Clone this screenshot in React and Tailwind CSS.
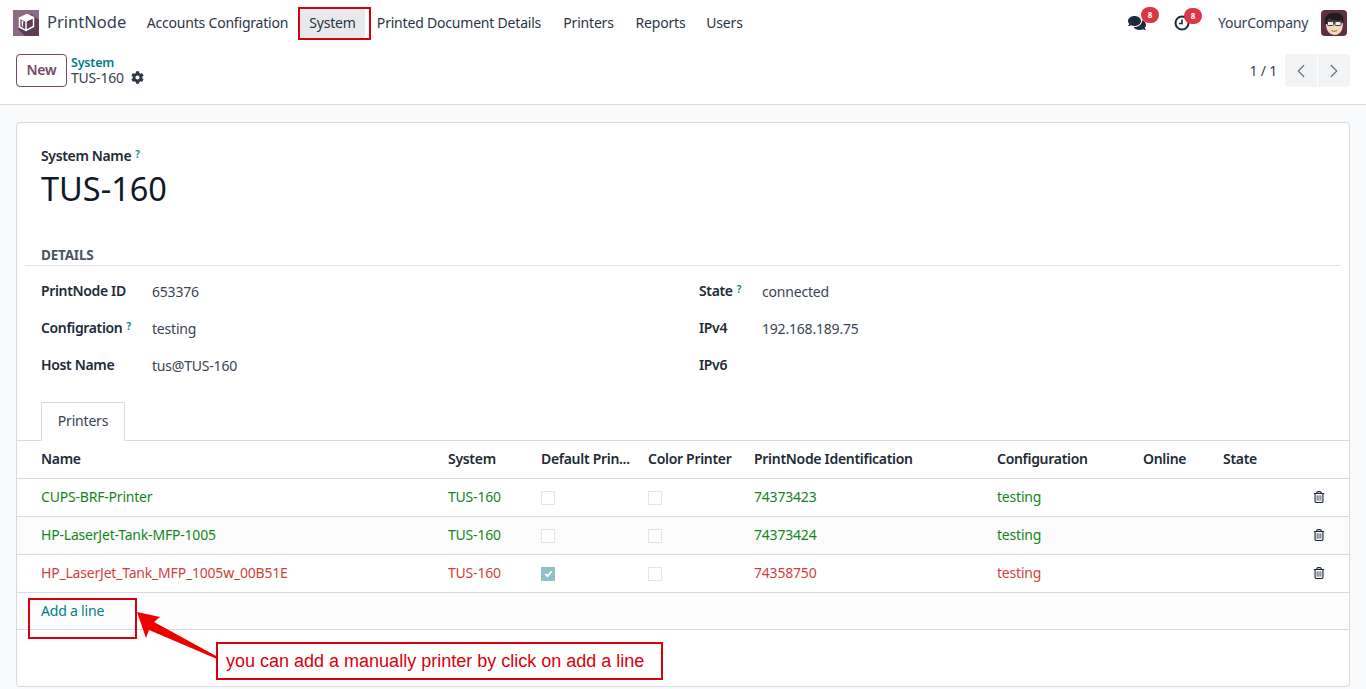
import React from "react";
import { FaCog, FaComments } from "react-icons/fa";
import { FaRegTrashCan } from "react-icons/fa6";
import { FiChevronLeft, FiChevronRight } from "react-icons/fi";

const menu = [
  { label: "Accounts Configration", cls: "w-[163px]" },
  { label: "System", cls: "w-[65px] mx-px bg-[#e7e9ed] rounded" },
  { label: "Printed Document Details", cls: "w-[186px]" },
  { label: "Printers", cls: "w-[73px]" },
  { label: "Reports", cls: "w-[71px]" },
  { label: "Users", cls: "w-[57px]" },
];

const printers = [
  { name: "CUPS-BRF-Printer", id: "74373423", color: "text-[#16851f]" },
  { name: "HP-LaserJet-Tank-MFP-1005", id: "74373424", color: "text-[#16851f]", shade: true },
  { name: "HP_LaserJet_Tank_MFP_1005w_00B51E", id: "74358750", color: "text-[#d23f3a]", checked: true },
];

const cols = "grid grid-cols-[407px_93px_107px_106px_243px_146px_80px_1fr]";

const Help = () => (
  <sup className="ml-1 text-[10px] font-semibold text-[#017e84] relative -top-[3px]">?</sup>
);

const Logo = () => (
  <svg width="26" height="26" viewBox="0 0 26 26" className="shrink-0">
    <rect width="26" height="26" fill="#8b6a83" />
    <path d="M5 19 L18 4 L26 10 V26 H12 Z" fill="#5d3c55" />
    <path d="M6.5 8 L14 4.5 L20.5 7.5 L13 11 Z" fill="#fff" />
    <path d="M6.5 8 L14 4.5 L20.5 7.5 V16.5 L13 20.5 L6.5 17 Z" fill="none" stroke="#fff" strokeWidth="1.5" />
    <path d="M13 11 V20.5 M20.5 7.5 L13 11 L6.5 8" fill="none" stroke="#fff" strokeWidth="1.5" />
    <path d="M9.5 11 V16.5" fill="none" stroke="#fff" strokeWidth="1.3" />
  </svg>
);

const Avatar = () => (
  <svg width="26" height="26" viewBox="0 0 26 26" className="shrink-0 rounded">
    <rect width="26" height="26" fill="#5c2f45" />
    <path d="M5 14 C5 21 9 25 14 25 C19 25 22 20 22 13 Z" fill="#f3d8bb" />
    <path d="M4 14 C2 6 8 2 14 3 C20 2 24 7 22 14 L21 10 C16 11 10 10 8 8 C7 10 6 12 6 14 Z" fill="#221c20" />
    <rect x="6.5" y="11.5" width="6" height="4" rx="1" fill="#eef0ee" stroke="#3a3a3a" strokeWidth="1" />
    <rect x="14" y="11.5" width="6" height="4" rx="1" fill="#eef0ee" stroke="#3a3a3a" strokeWidth="1" />
    <path d="M10.5 20.5 C12 21.5 14 21.5 16 20.5" fill="none" stroke="#9a5a48" strokeWidth="1" />
  </svg>
);

const Clock = () => (
  <svg width="16" height="16" viewBox="0 0 16 16" fill="none" stroke="#1f2a3a" strokeWidth="2">
    <circle cx="8" cy="8" r="6.5" />
    <path d="M8 4.5 V8.5 H5" strokeWidth="1.6" />
  </svg>
);

const Badge = ({ left }) => (
  <span className={`absolute -top-[7px] ${left} w-[18px] h-[16px] rounded-full bg-[#dc3545] text-white text-[8px] font-bold flex items-center justify-center`}>
    8
  </span>
);

const Box = ({ checked }) =>
  checked ? (
    <span className="w-[14px] h-[14px] mt-[2px] bg-[#8fc2c6] flex items-center justify-center">
      <svg width="9" height="9" viewBox="0 0 10 10" fill="none" stroke="#fff" strokeWidth="2">
        <path d="M1.5 5.5 L4 8 L8.5 2.5" />
      </svg>
    </span>
  ) : (
    <span className="w-[14px] h-[14px] mt-[2px] border border-[#e2e4e8] bg-white block" />
  );

const Field = ({ label, value, help, right }) => (
  <div className="flex items-center h-[37px]">
    <div className={`${right ? "w-[63px]" : "w-[111px]"} font-semibold tracking-[-0.35px] text-[#212b36] whitespace-nowrap`}>
      {label}
      {help && <Help />}
    </div>
    <div className="pt-[1px] text-[#3a4452] whitespace-nowrap">{value}</div>
  </div>
);

export default function App() {
  return (
    <div className="relative h-[689px] overflow-hidden bg-[#f9fafb] text-[14px] tracking-[-0.2px] text-[#212b36] font-['Noto_Sans',sans-serif]">
      {/* top nav */}
      <div className="h-[46px] bg-white flex items-center pl-[13px] pr-[19px]">
        <Logo />
        <span className="ml-[8px] w-[89px] pb-[1px] text-[16.5px] text-[#374151] tracking-normal">PrintNode</span>
        {menu.map((m) => (
          <div key={m.label} className={`h-[30px] pb-[1px] flex items-center justify-center whitespace-nowrap text-[#2b3542] ${m.cls}`}>
            {m.label}
          </div>
        ))}
        <div className="ml-auto flex items-center">
          <div className="relative w-[46px] flex text-[#1f2a3a]">
            <FaComments size={18} />
            <Badge left="left-[13px]" />
          </div>
          <div className="relative w-[44px] flex">
            <Clock />
            <Badge left="left-[10px]" />
          </div>
          <span className="w-[103px] pb-[1px] tracking-[-0.25px] text-[#374151]">YourCompany</span>
          <Avatar />
        </div>
      </div>

      {/* control panel */}
      <div className="h-[59px] bg-white border-b border-[#d8dadd] flex items-start pl-[16px] pr-[16px] pt-[8px]">
        <button className="w-[51px] h-[33px] pb-[2px] border border-[#714b67] rounded font-semibold text-[#714b67]">New</button>
        <div className="ml-[4px] leading-[15px]">
          <div className="text-[12.5px] font-semibold text-[#017e84] mt-[1px]">System</div>
          <div className="flex items-center text-[#374151]">
            TUS-160
            <FaCog size={13} className="ml-[7px] text-[#2b3a4a]" />
          </div>
        </div>
        <div className="ml-auto flex items-center">
          <span className="mr-[8px] pb-[1px] text-[#374151]">1 / 1</span>
          <div className="w-[32px] h-[33px] bg-[#f1f3f5] rounded-l flex items-center justify-center text-[#6b7280] mr-[1px]">
            <FiChevronLeft size={22} strokeWidth={1.3} />
          </div>
          <div className="w-[32px] h-[33px] bg-[#f1f3f5] rounded-r flex items-center justify-center text-[#6b7280]">
            <FiChevronRight size={22} strokeWidth={1.3} />
          </div>
        </div>
      </div>

      {/* form sheet */}
      <div className="mt-[17px] mx-[16px] h-[565px] bg-white border border-[#d8dadd] rounded">
        <div className="pt-[23px] px-[24px]">
          <div className="font-semibold tracking-[-0.35px] h-[20px] leading-[20px]">
            System Name
            <Help />
          </div>
          <div className="mt-[2px] text-[32.5px] leading-[42px] tracking-normal text-[#111827]">TUS-160</div>
        </div>

        <div className="mt-[36px] mx-[8px] border-b border-[#e4e6e9] h-[20px] pl-[16px] text-[13.5px] font-bold text-[#4b5563] leading-[19px]">
          DETAILS
        </div>

        <div className="mt-[6px] px-[24px] grid grid-cols-[658px_1fr]">
          <div>
            <Field label="PrintNode ID" value="653376" />
            <Field label="Configration" value="testing" help />
            <Field label="Host Name" value="tus@TUS-160" />
          </div>
          <div>
            <Field label="State" value="connected" help right />
            <Field label="IPv4" value="192.168.189.75" right />
            <Field label="IPv6" value="" right />
          </div>
        </div>

        {/* tabs */}
        <div className="mt-[19px] h-[39px] border-b border-[#d8dadd] pl-[24px]">
          <div className="w-[84px] h-[39px] pb-[2px] bg-white border border-[#d8dadd] border-b-white flex items-center justify-center text-[#374151]">
            Printers
          </div>
        </div>

        {/* table */}
        <div className={`${cols} h-[38px] pb-[2px] items-center pl-[24px] border-b border-[#d8dadd] font-semibold tracking-[-0.3px]`}>
          <div>Name</div>
          <div>System</div>
          <div>Default Prin...</div>
          <div>Color Printer</div>
          <div>PrintNode Identification</div>
          <div>Configuration</div>
          <div>Online</div>
          <div>State</div>
        </div>
        {printers.map((p) => (
          <div
            key={p.id}
            className={`${cols} h-[38px] pb-[2px] items-center pl-[24px] border-b border-[#d8dadd] ${p.color} ${p.shade ? "bg-[#fbfbfb]" : ""}`}
          >
            <div className="whitespace-nowrap">{p.name}</div>
            <div>TUS-160</div>
            <div><Box checked={p.checked} /></div>
            <div><Box /></div>
            <div>{p.id}</div>
            <div>testing</div>
            <div />
            <div className="flex justify-end pr-[24px] text-[#1f2a3a]">
              <FaRegTrashCan size={12} />
            </div>
          </div>
        ))}
        <div className="h-[37px] border-b border-[#d8dadd] bg-[#fdfdfd] pl-[24px] pt-[8px] text-[#017e84] leading-[20px]">
          Add a line
        </div>
      </div>

      {/* annotations laid over the page */}
      <div className="absolute left-[298px] top-[7px] w-[73px] h-[33px] border-2 border-[#d9000d]" />
      <div className="absolute left-[28px] top-[598px] w-[109px] h-[41px] border-2 border-[#d9000d]" />
      <svg className="absolute left-[130px] top-[605px]" width="95" height="60" viewBox="0 0 95 60">
        <path d="M7 7 L30 12 L24 17 L88 52 L87 54 L19 25 L16 33 Z" fill="#ee0000" />
      </svg>
      <div className="absolute left-[216px] top-[642px] w-[447px] h-[38px] border-2 border-[#d9000d] bg-white flex items-center pl-[8px] text-[18px] tracking-normal text-[#d9000d] font-['Liberation_Sans',sans-serif] whitespace-nowrap">
        you can add a manually printer by click on add a line
      </div>
    </div>
  );
}
